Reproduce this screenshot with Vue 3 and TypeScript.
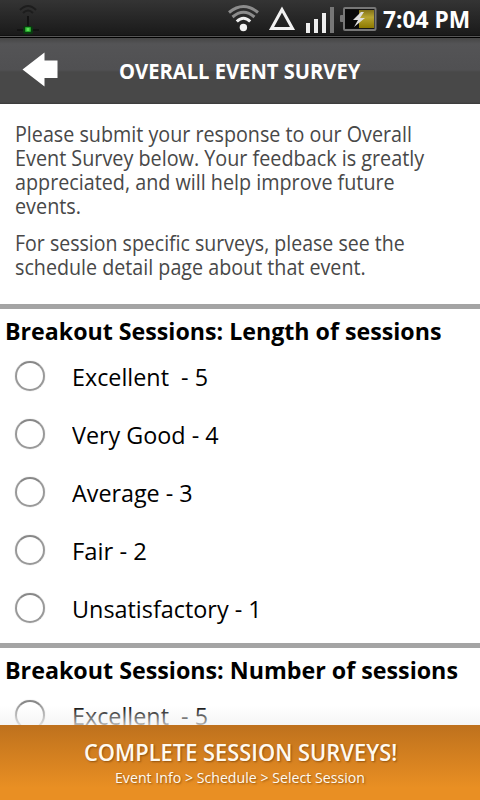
<script setup lang="ts">
import type { Directive } from 'vue'

interface Line { text: string; width: number }
interface Question { title: Line; options: Line[] }

// Fits a line of text horizontally to the width given in pixels.
const vFit: Directive<HTMLElement, number> = {
  mounted(el, binding) {
    el.style.transform = `scaleX(${binding.value / el.offsetWidth})`
  },
}

const intro: Line[][] = [
  [
    { text: 'Please submit your response to our Overall', width: 397 },
    { text: 'Event Survey below. Your feedback is greatly', width: 409 },
    { text: 'appreciated, and will help improve future', width: 380 },
    { text: 'events.', width: 66 },
  ],
  [
    { text: 'For session specific surveys, please see the', width: 390 },
    { text: 'schedule detail page about that event.', width: 351 },
  ],
]

const questions: Question[] = [
  {
    title: { text: 'Breakout Sessions: Length of sessions', width: 436 },
    options: [
      { text: 'Excellent  - 5', width: 136 },
      { text: 'Very Good - 4', width: 147 },
      { text: 'Average - 3', width: 121 },
      { text: 'Fair - 2', width: 75 },
      { text: 'Unsatisfactory - 1', width: 190 },
    ],
  },
  {
    title: { text: 'Breakout Sessions: Number of sessions', width: 453 },
    options: [{ text: 'Excellent  - 5', width: 136 }],
  },
]
</script>

<template>
  <div class="screen">
    <div class="status">
      <svg class="beacon" width="30" height="37" viewBox="0 0 30 37">
        <path d="M6 10Q14 2 22 10M9 13Q14 8 19 13" fill="none" stroke="#1d1d1d" stroke-width="2" />
        <path d="M13 16h2v10h-2zM3 29h22v2H3z" fill="#131313" />
        <rect x="9" y="26" width="10" height="8" rx="2" fill="#0a3a10" />
        <rect x="11" y="27" width="6" height="5" rx="1" fill="#25a52b" />
        <rect x="12.500" y="28" width="3" height="3" fill="#5bdd58" />
      </svg>
      <svg class="signals" width="150" height="37" viewBox="0 0 150 37">
        <g fill="none" stroke-width="3">
          <path d="M2 12.500Q16.500 0.500 31 12.500" stroke="#8c8c8c" />
          <path d="M5.500 17Q16.500 7.500 27.500 17" stroke="#8c8c8c" />
          <path d="M9.800 21.500Q16.500 15 23.200 21.500" stroke="#eee" />
        </g>
        <circle cx="16.400" cy="27.500" r="3.700" fill="#f2f2f2" />
        <path d="M55 9.500L44.500 28.500H65.500Z" fill="none" stroke="#f2f2f2" stroke-width="3" />
        <path d="M79 23h4v10h-4zM87 19h4v14h-4zM95 13h4v20h-4z" fill="#eee" />
        <path d="M103 7h4v26h-4z" fill="#777" />
        <rect x="113" y="15" width="4" height="7" rx="1" fill="#777" />
        <rect x="117" y="8" width="31.500" height="22" rx="1" fill="#151515" stroke="#777" stroke-width="2" />
        <rect x="118" y="9.500" width="15" height="19" fill="#090909" />
        <rect x="132" y="10" width="15" height="18" fill="url(#cell)" />
        <path d="M134 12l-8 8h5l-4 7 11-9h-5l4-6z" fill="#ddd" />
        <defs>
          <linearGradient id="cell" x1="0" y1="0" x2="0" y2="1">
            <stop offset="0" stop-color="#807018" />
            <stop offset=".4" stop-color="#b7a532" />
            <stop offset="1" stop-color="#8d7900" />
          </linearGradient>
        </defs>
      </svg>
      <div class="clock"><span v-fit="87" class="line">7:04 PM</span></div>
    </div>

    <header class="bar">
      <svg class="back" width="36" height="36" viewBox="0 0 36 36">
        <path d="M0.500 17.500L22.500 0.500V8.500H35.500V26H22.500V34.500Z" fill="#fff" />
      </svg>
      <h1><span v-fit="241" class="line">OVERALL EVENT SURVEY</span></h1>
    </header>

    <main>
      <section class="intro">
        <p v-for="(para, i) in intro" :key="i">
          <span v-for="line in para" :key="line.text" v-fit="line.width" class="line">{{ line.text }}</span>
        </p>
      </section>
      <section v-for="q in questions" :key="q.title.text" class="question">
        <h2><span v-fit="q.title.width" class="line">{{ q.title.text }}</span></h2>
        <div v-for="option in q.options" :key="option.text" class="option">
          <i class="radio"></i>
          <span v-fit="option.width" class="line">{{ option.text }}</span>
        </div>
      </section>
    </main>

    <footer>
      <strong><span v-fit="313" class="line">COMPLETE SESSION SURVEYS!</span></strong>
      <small><span v-fit="250" class="line">Event Info &gt; Schedule &gt; Select Session</span></small>
    </footer>
  </div>
</template>

<style>
body { margin: 0; }
</style>

<style scoped>
.screen {
  width: 480px;
  height: 800px;
  display: flex;
  flex-direction: column;
  overflow: hidden;
  background: #fff;
  font-family: "Open Sans", "Noto Sans", sans-serif;
}
.line {
  display: block;
  width: max-content;
  white-space: pre;
  transform-origin: left;
}
.status {
  height: 38px;
  flex: none;
  display: flex;
  box-sizing: border-box;
  background: linear-gradient(#343434, #1a1a1a 35px, #080808 36px, #555 36px, #555 37px, #000 37px);
}
.beacon { margin-left: 14px; }
.signals { margin-left: 183px; }
.clock {
  margin-left: 6px;
  font-size: 23px;
  font-weight: 700;
  line-height: 38px;
  color: #fff;
}
.bar {
  height: 66px;
  flex: none;
  display: flex;
  box-sizing: border-box;
  padding-left: 22px;
  background: linear-gradient(#464646, #545456 6px, #505052 32px, #484848 34px, #484848 64px, #393939);
}
.back { margin-top: 14px; }
h1 {
  margin: 0 0 0 61px;
  font-size: 20.5px;
  line-height: 66px;
  color: #fff;
}
main {
  height: 621px;
  flex: none;
  overflow: hidden;
  position: relative;
}
main::after {
  content: "";
  position: absolute;
  inset: auto 0 0;
  height: 20px;
  background: linear-gradient(rgba(255, 255, 255, 0), rgba(242, 242, 242, .75));
}
.intro {
  height: 182px;
  padding: 18px 15px 0;
  font-size: 22.5px;
  line-height: 24px;
  color: #484848;
}
.intro p { margin: 0 0 13px; }
.question {
  border-top: 5px solid #a4a4a4;
  padding-bottom: 5px;
}
h2 {
  margin: 0;
  height: 35px;
  padding: 4px 0 0 5px;
  font-size: 23.5px;
  line-height: 37px;
  color: #000;
}
.option {
  height: 58px;
  display: flex;
  align-items: center;
  gap: 27px;
  padding-left: 15px;
  font-size: 23.5px;
  line-height: 58px;
  color: #000;
}
.radio {
  width: 26px;
  height: 26px;
  margin-bottom: 2px;
  border: 2px solid #999;
  border-top-color: #888;
  border-radius: 50%;
  box-shadow: 0 0 1px #aaa;
}
footer {
  flex: 1;
  display: flex;
  flex-direction: column;
  align-items: flex-start;
  box-sizing: border-box;
  padding-top: 12px;
  background: linear-gradient(#be711d, #e98f23 63px, #e98f23);
  color: #fffaf0;
  text-shadow: 1px 1px 2px rgba(100, 50, 0, .6);
}
strong {
  margin-left: 84px;
  font-size: 23px;
  font-weight: 600;
  line-height: 30px;
}
small {
  margin-left: 115px;
  font-size: 14.5px;
  line-height: 21px;
}
</style>
